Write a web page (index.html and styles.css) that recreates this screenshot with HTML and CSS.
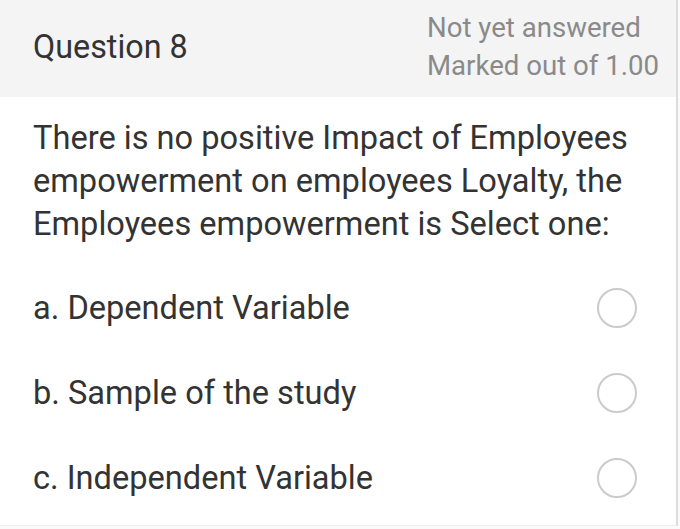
FILE: index.html
```html
<!DOCTYPE html>
<html>
<head>
<meta charset="utf-8">
<link rel="stylesheet" href="styles.css">
</head>
<body>
<div class="card">
  <div class="header">
    <div class="qno">Question 8</div>
    <div class="status">
      <div>Not yet answered</div>
      <div>Marked out of 1.00</div>
    </div>
  </div>
  <div class="content">
    <p class="qtext">There is no positive Impact of Employees empowerment on employees Loyalty, the Employees empowerment is Select one:</p>
    <div class="options">
      <div class="option"><span>a. Dependent Variable</span><span class="radio"></span></div>
      <div class="option"><span>b. Sample of the study</span><span class="radio"></span></div>
      <div class="option"><span>c. Independent Variable</span><span class="radio"></span></div>
    </div>
  </div>
</div>
</body>
</html>
```
FILE: styles.css
```css
html, body {
  margin: 0;
  padding: 0;
  background: #fafafa;
}
body {
  font-family: Roboto, "Liberation Sans", sans-serif;
  color: #333;
}
.card {
  width: 676px;
  height: 525px;
  background: #fff;
  border-right: 2px solid #dcdcdc;
  border-bottom: 1px solid #eee;
  overflow: hidden;
}
.header {
  height: 97px;
  background: #f4f4f4;
  display: flex;
  align-items: center;
  justify-content: space-between;
  padding: 0 17px 0 33px;
}
.qno {
  font-size: 32.3px;
  color: #333;
  padding-bottom: 4px;
}
.status {
  font-size: 27.6px;
  color: #8a8a8a;
  line-height: 38px;
  padding-bottom: 3px;
}
.content {
  padding: 20px 39px 0 33px;
}
.qtext {
  margin: 0;
  font-size: 32.6px;
  line-height: 43px;
  color: #333;
}
.options {
  margin-top: 19px;
}
.option {
  height: 85px;
  display: flex;
  align-items: center;
  justify-content: space-between;
  font-size: 32.6px;
}
.radio {
  width: 36px;
  height: 36px;
  border: 2px solid #cbcbcb;
  border-radius: 50%;
}
```
